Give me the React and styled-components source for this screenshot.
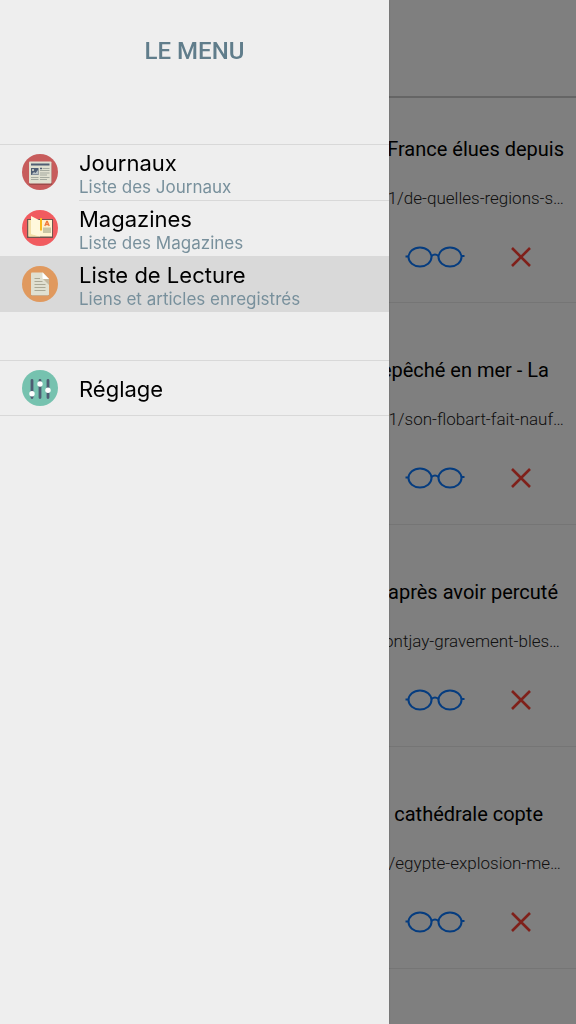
import React from 'react';
import styled, { createGlobalStyle } from 'styled-components';

const GlobalStyle = createGlobalStyle`
    * {
        box-sizing: border-box;
    }
    body {
        margin: 0;
        background: white;
        font-family: Roboto, "Liberation Sans", sans-serif;
    }
    button {
        padding: 0;
        border: none;
        background: none;
        font: inherit;
        cursor: pointer;
    }
    svg {
        display: block;
    }
`

const Page = styled.div`
    height: 100vh;
    overflow: hidden;
`

const TopBar = styled.header`
    height: 98px;
    border-bottom: 2px solid #cacaca;
`

const Feed = styled.main`
    overflow: hidden;
`

const Article = styled.article`
    display: flex;
    flex-direction: column;
    align-items: flex-end;
    height: 222px;
    padding-top: 53px;
    border-bottom: 1px solid #eaeaea;
    &:first-child {
        height: 205px;
        padding-top: 37px;
    }
`

const ArticleTitle = styled.h2`
    margin: 0;
    padding-right: ${props => props.$ragged}px;
    font-size: 20px;
    line-height: 28px;
    font-weight: 400;
    white-space: nowrap;
    color: black;
`

const ArticleUrl = styled.p`
    margin: 22px 0 0;
    padding-right: ${props => props.$ragged}px;
    font-size: 17px;
    line-height: 26px;
    font-weight: 300;
    white-space: nowrap;
    color: #222;
`

const Actions = styled.div`
    display: flex;
    align-items: center;
    gap: 46px;
    margin-top: 35px;
    padding-right: 45px;
`

const Scrim = styled.div`
    position: fixed;
    inset: 0;
    background: rgba(0, 0, 0, 0.5);
`

const Drawer = styled.nav`
    position: fixed;
    top: 0;
    bottom: 0;
    left: 0;
    width: calc(100% - 187px);
    background: #eee;
    box-shadow: 0 0 2px rgba(0, 0, 0, 0.2);
    font-family: Inter, "Liberation Sans", sans-serif;
`

const DrawerTitle = styled.h1`
    margin: 0;
    height: 144px;
    padding-top: 36px;
    font-family: Roboto, sans-serif;
    font-size: 24px;
    line-height: 30px;
    font-weight: 500;
    text-align: center;
    color: #607d8b;
`

const MenuGroup = styled.div`
    margin-bottom: 48px;
    box-shadow: inset 0 1px #d8d8d8, inset 0 -1px #d8d8d8;
`

const MenuItem = styled.button`
    display: flex;
    align-items: center;
    width: 100%;
    height: 56px;
    padding-left: 22px;
    text-align: left;
    background: ${props => props.$active ? '#d9d9d9' : 'transparent'};
`

const MenuText = styled.span`
    display: flex;
    flex: 1;
    flex-direction: column;
    justify-content: center;
    height: 100%;
    margin-left: 21px;
    padding-top: 1px;
    border-top: 1px solid ${props => props.$line ? '#d8d8d8' : 'transparent'};
`

const MenuLabel = styled.span`
    font-size: 22px;
    line-height: 28px;
    color: black;
`

const MenuHint = styled.span`
    font-size: 17px;
    line-height: 20px;
    color: #78909c;
`

const IconButton = styled.button`
    display: block;
`

const JournalIcon = () => (
    <svg width="36" height="36" viewBox="0 0 36 36">
        <circle cx="18" cy="18" r="18" fill="#c75c5c" />
        <rect x="7" y="9" width="23" height="22" rx="1" fill="#9e4a4a" />
        <rect x="7" y="7.5" width="22.5" height="22" rx="1" fill="#e0e0d1" />
        <rect x="9" y="9.5" width="18.5" height="2" fill="#4f5d73" />
        <rect x="9" y="14" width="7.5" height="7" fill="#4f5d73" />
        <circle cx="11" cy="16" r="1" fill="#e0e0d1" />
        <path d="M9.5 20.5l2.5-2.5 1.5 1 2.5-3v4.5z" fill="#b9c2c6" />
        <path d="M18 14.5h2" stroke="#4f5d73" strokeWidth="1.5" />
        <path d="M20.5 14.5h7M18 16.5h9.5M18 19h9.5M18 21h7M9 23.5h7.5M9 25.5h7.5M18 23.5h9.5M18 25.5h7" stroke="#a4a99f" />
    </svg>
)

const MagazineIcon = () => (
    <svg width="36" height="36" viewBox="0 0 36 36">
        <circle cx="18" cy="18" r="18" fill="#f15b5f" />
        <rect x="5" y="9" width="26" height="19" fill="#70544f" />
        <path d="M6.5 10H30v16.5H6.5z" fill="#fff3d0" />
        <path d="M6.5 10H9v14l9 2.5H6.5z" fill="#f3dfa6" />
        <path d="M9 6l9 4.5v16L9 24z" fill="#fff8dc" />
        <path d="M18 8h2v13l-1-1-1 1z" fill="#f9b91d" />
        <path d="M22.8 16l1.9-4.5h.6l1.9 4.5M23.5 14.5h3" fill="none" stroke="#f0793a" strokeWidth="1.3" />
        <rect x="21" y="17.5" width="8" height="5.5" fill="#c9c5a5" />
    </svg>
)

const ReadingIcon = () => (
    <svg width="36" height="36" viewBox="0 0 36 36">
        <circle cx="18" cy="18" r="18" fill="#e0995e" />
        <path d="M10 8h12l5 7v14q0 1-1 1H10q-1 0-1-1V9q0-1 1-1z" fill="#b47b4b" />
        <path d="M10 6.5h11l6 6.5v15.5q0 1-1 1H10q-1 0-1-1v-21q0-1 1-1z" fill="#e0e0d1" />
        <path d="M21 13h6v6z" fill="#c4b9a0" />
        <path d="M20.5 6.5l6.5 6.5h-5.5q-1 0-1-1z" fill="white" />
        <path d="M12.5 12.5h5.5M12.5 15.5h8M12.5 18.5h11M12.5 21.5h11M12.5 24.5h11" stroke="#aaa895" />
    </svg>
)

const SettingsIcon = () => (
    <svg width="36" height="36" viewBox="0 0 36 36">
        <circle cx="18" cy="18" r="18" fill="#76c2af" />
        <path d="M10 10.5v17M18 10.5v17M26 10.5v17" stroke="#4f5d73" strokeWidth="2.8" strokeLinecap="round" />
        <circle cx="10" cy="23.8" r="2.7" fill="white" />
        <circle cx="18" cy="14" r="2.7" fill="white" />
        <circle cx="26" cy="20.2" r="2.7" fill="white" />
    </svg>
)

const GlassesIcon = () => (
    <svg width="60" height="22" viewBox="0 0 60 22" fill="none" stroke="#0a78ff" strokeWidth="2">
        <ellipse cx="15" cy="11" rx="11.5" ry="9.5" />
        <ellipse cx="45" cy="11" rx="11.5" ry="9.5" />
        <path d="M26.5 10q3.5-3 7 0M.5 10.5h3M56.5 10h3" />
    </svg>
)

const CrossIcon = () => (
    <svg width="20" height="20" viewBox="0 0 20 20" fill="none" stroke="#ff4034" strokeWidth="2.6">
        <path d="M1 1l18 18M19 1L1 19" />
    </svg>
)

const mainItems = [
    { label: 'Journaux', hint: 'Liste des Journaux', Icon: JournalIcon },
    { label: 'Magazines', hint: 'Liste des Magazines', Icon: MagazineIcon, line: true },
    { label: 'Liste de Lecture', hint: 'Liens et articles enregistrés', Icon: ReadingIcon, active: true },
]

const articles = [
    { title: 'France élues depuis', titleEnd: 12, url: '1/de-quelles-regions-s…', urlEnd: 12 },
    { title: 'epêché en mer - La', titleEnd: 27, url: '1/son-flobart-fait-nauf…', urlEnd: 12 },
    { title: 'après avoir percuté', titleEnd: 18, url: 'ontjay-gravement-bles…', urlEnd: 16 },
    { title: 'a cathédrale copte', titleEnd: 33, url: '/egypte-explosion-me…', urlEnd: 15 },
]

class App extends React.Component {
    render(){
    return(
        <Page>
            <GlobalStyle />
            <TopBar />
            <Feed>
                {articles.map(article => (
                    <Article key={article.title}>
                        <ArticleTitle $ragged={article.titleEnd}>{article.title}</ArticleTitle>
                        <ArticleUrl $ragged={article.urlEnd}>{article.url}</ArticleUrl>
                        <Actions>
                            <IconButton aria-label="Lire"><GlassesIcon /></IconButton>
                            <IconButton aria-label="Supprimer"><CrossIcon /></IconButton>
                        </Actions>
                    </Article>
                ))}
            </Feed>
            <Scrim />
            <Drawer>
                <DrawerTitle>LE MENU</DrawerTitle>
                <MenuGroup>
                    {mainItems.map(({ label, hint, Icon, line, active }) => (
                        <MenuItem key={label} $active={active}>
                            <Icon />
                            <MenuText $line={line}>
                                <MenuLabel>{label}</MenuLabel>
                                <MenuHint>{hint}</MenuHint>
                            </MenuText>
                        </MenuItem>
                    ))}
                </MenuGroup>
                <MenuGroup>
                    <MenuItem>
                        <SettingsIcon />
                        <MenuText>
                            <MenuLabel>Réglage</MenuLabel>
                        </MenuText>
                    </MenuItem>
                </MenuGroup>
            </Drawer>
        </Page>
    )}
}

export default App
